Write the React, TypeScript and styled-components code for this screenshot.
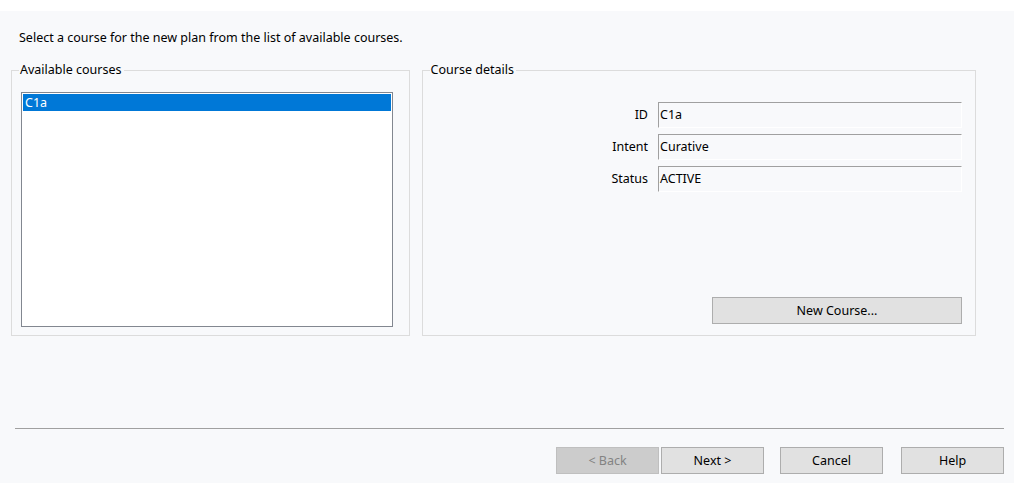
import React from "react";
import styled, { createGlobalStyle } from "styled-components";

const Global = createGlobalStyle`
  html, body { margin: 0; padding: 0; }
  body {
    background: #ffffff;
    font-family: "Noto Sans", "Open Sans", sans-serif;
    font-size: 12.5px;
    color: #000;
  }
`;

const Window = styled.div`
  height: 483px;
  display: flex;
  flex-direction: column;
  background: #ffffff;
`;

const TopStrip = styled.div`
  height: 11px;
  flex: none;
  background: #ffffff;
`;

const Body = styled.div`
  flex: 1;
  display: flex;
  flex-direction: column;
  background: #f8f9fb;
  padding: 0 10px 9px 11px;
`;

const Intro = styled.div`
  margin: 19px 0 0 8px;
  line-height: 16px;
  height: 16px;
`;

const GroupRow = styled.div`
  display: flex;
  gap: 12px;
  margin-top: 16px;
  padding-right: 28px;
`;

const Group = styled.fieldset<{ $width: number }>`
  width: ${(p) => p.$width}px;
  box-sizing: border-box;
  height: 274px;
  margin: 0;
  border: 1px solid #dcdcdc;
  padding: 0;
  display: flex;
  flex-direction: column;
  min-width: 0;
`;

const Legend = styled.legend`
  margin-left: 7px;
  padding: 0 2px 0 1px;
  line-height: 16px;
  font-size: 12.5px;
`;

const ListBox = styled.div`
  margin: 14px 16px 0 9px;
  height: 235px;
  box-sizing: border-box;
  border: 1px solid #828790;
  background: #ffffff;
  padding: 1px;
`;

const ListItem = styled.div<{ $selected?: boolean }>`
  height: 17px;
  line-height: 17px;
  padding-left: 2px;
  background: ${(p) => (p.$selected ? "#0078d7" : "transparent")};
  color: ${(p) => (p.$selected ? "#ffffff" : "#000")};
`;

const DetailsBody = styled.div`
  flex: 1;
  display: flex;
  flex-direction: column;
  padding: 24px 13px 11px 0;
`;

const Form = styled.div`
  display: grid;
  grid-template-columns: 1fr 304px;
  column-gap: 10px;
  row-gap: 6px;
`;

const FieldLabel = styled.div`
  text-align: right;
  line-height: 26px;
  height: 26px;
`;

const Field = styled.div`
  box-sizing: border-box;
  height: 26px;
  border-top: 1px solid #a0a0a0;
  border-left: 1px solid #a0a0a0;
  border-bottom: 1px solid #ffffff;
  border-right: 1px solid #ffffff;
  background: #f8f9fb;
  padding-left: 1px;
  line-height: 24px;
`;

const ActionRow = styled.div`
  margin-top: auto;
  display: flex;
  justify-content: flex-end;
`;

const Button = styled.button<{ $width?: number; $disabled?: boolean }>`
  width: ${(p) => p.$width ?? 103}px;
  height: 27px;
  box-sizing: border-box;
  font-family: "Noto Sans", "Open Sans", sans-serif;
  font-size: 12.5px;
  padding: 0;
  border: 1px solid ${(p) => (p.$disabled ? "#bfbfbf" : "#adadad")};
  background: ${(p) => (p.$disabled ? "#cccccc" : "#e1e1e1")};
  color: ${(p) => (p.$disabled ? "#838383" : "#000")};
`;

const Separator = styled.div`
  margin-top: auto;
  margin-left: 4px;
  height: 1px;
  background: #a0a0a0;
`;

const ButtonBar = styled.div`
  display: flex;
  justify-content: flex-end;
  margin-top: 18px;
`;

const ButtonGroup = styled.div<{ $gap: number; $ml: number }>`
  display: flex;
  gap: ${(p) => p.$gap}px;
  margin-left: ${(p) => p.$ml}px;
`;

export default function App() {
  return (
    <>
      <Global />
      <Window>
        <TopStrip />
        <Body>
          <Intro>Select a course for the new plan from the list of available courses.</Intro>
          <GroupRow>
            <Group $width={399}>
              <Legend>Available courses</Legend>
              <ListBox>
                <ListItem $selected>C1a</ListItem>
              </ListBox>
            </Group>
            <Group $width={555}>
              <Legend>Course details</Legend>
              <DetailsBody>
                <Form>
                  <FieldLabel>ID</FieldLabel>
                  <Field>C1a</Field>
                  <FieldLabel>Intent</FieldLabel>
                  <Field>Curative</Field>
                  <FieldLabel>Status</FieldLabel>
                  <Field>ACTIVE</Field>
                </Form>
                <ActionRow>
                  <Button $width={250}>New Course...</Button>
                </ActionRow>
              </DetailsBody>
            </Group>
          </GroupRow>
          <Separator />
          <ButtonBar>
            <ButtonGroup $gap={2} $ml={0}>
              <Button $disabled>&lt; Back</Button>
              <Button>Next &gt;</Button>
            </ButtonGroup>
            <ButtonGroup $gap={0} $ml={16}>
              <Button>Cancel</Button>
            </ButtonGroup>
            <ButtonGroup $gap={0} $ml={18}>
              <Button>Help</Button>
            </ButtonGroup>
          </ButtonBar>
        </Body>
      </Window>
    </>
  );
}
